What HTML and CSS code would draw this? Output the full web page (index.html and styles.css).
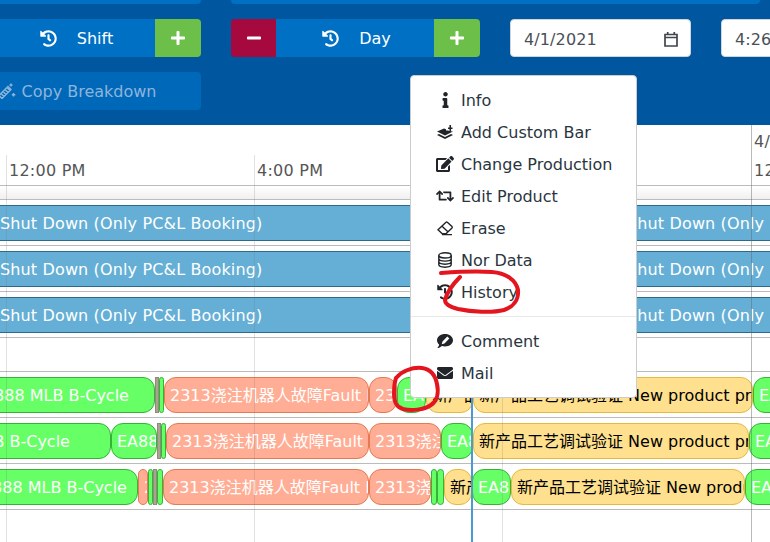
FILE: index.html
```html
<!DOCTYPE html>
<html lang="en">
<head>
<meta charset="utf-8">
<title>Schedule</title>
<link rel="stylesheet" href="styles.css">
</head>
<body>
<header class="toolbar">
  <button class="btn btn-top"></button>
  <button class="btn btn-top btn-wide"></button>
  <div class="stepper">
    <span class="step step-minus"><svg class="i-step" viewBox="0 0 448 512"><path d="M416 208H32c-17.67 0-32 14.33-32 32v32c0 17.67 14.33 32 32 32h384c17.67 0 32-14.33 32-32v-32c0-17.67-14.33-32-32-32z"/></svg></span>
    <span class="step-label"><svg class="i-hist" viewBox="0 0 512 512"><path d="M504 255.531c.253 136.64-111.18 248.372-247.82 248.468-59.015.042-113.223-20.53-155.822-54.911-11.077-8.94-11.905-25.541-1.839-35.607l11.267-11.267c8.609-8.609 22.353-9.551 31.891-1.984C173.062 425.135 212.781 440 256 440c101.705 0 184-82.311 184-184 0-101.705-82.311-184-184-184-48.814 0-93.149 18.969-126.068 49.932l50.754 50.754c10.08 10.08 2.941 27.314-11.313 27.314H24c-8.837 0-16-7.163-16-16V38.627c0-14.254 17.234-21.393 27.314-11.314l49.372 49.372C129.209 34.136 189.552 8 256 8c136.81 0 247.747 110.78 248 247.531zm-180.912 78.784l9.823-12.63c8.138-10.463 6.253-25.542-4.21-33.679L288 256.349V152c0-13.255-10.745-24-24-24h-16c-13.255 0-24 10.745-24 24v135.651l65.409 50.874c10.463 8.137 25.541 6.253 33.679-4.21z"/></svg>Shift</span>
    <span class="step step-plus"><svg class="i-step" viewBox="0 0 448 512"><path d="M416 208H272V64c0-17.67-14.33-32-32-32h-32c-17.67 0-32 14.33-32 32v144H32c-17.67 0-32 14.33-32 32v32c0 17.67 14.33 32 32 32h144v144c0 17.67 14.33 32 32 32h32c17.67 0 32-14.33 32-32V304h144c17.67 0 32-14.33 32-32v-32c0-17.67-14.33-32-32-32z"/></svg></span>
  </div>
  <div class="stepper stepper-day">
    <span class="step step-minus"><svg class="i-step" viewBox="0 0 448 512"><path d="M416 208H32c-17.67 0-32 14.33-32 32v32c0 17.67 14.33 32 32 32h384c17.67 0 32-14.33 32-32v-32c0-17.67-14.33-32-32-32z"/></svg></span>
    <span class="step-label"><svg class="i-hist" viewBox="0 0 512 512"><path d="M504 255.531c.253 136.64-111.18 248.372-247.82 248.468-59.015.042-113.223-20.53-155.822-54.911-11.077-8.94-11.905-25.541-1.839-35.607l11.267-11.267c8.609-8.609 22.353-9.551 31.891-1.984C173.062 425.135 212.781 440 256 440c101.705 0 184-82.311 184-184 0-101.705-82.311-184-184-184-48.814 0-93.149 18.969-126.068 49.932l50.754 50.754c10.08 10.08 2.941 27.314-11.313 27.314H24c-8.837 0-16-7.163-16-16V38.627c0-14.254 17.234-21.393 27.314-11.314l49.372 49.372C129.209 34.136 189.552 8 256 8c136.81 0 247.747 110.78 248 247.531zm-180.912 78.784l9.823-12.63c8.138-10.463 6.253-25.542-4.21-33.679L288 256.349V152c0-13.255-10.745-24-24-24h-16c-13.255 0-24 10.745-24 24v135.651l65.409 50.874c10.463 8.137 25.541 6.253 33.679-4.21z"/></svg>Day</span>
    <span class="step step-plus"><svg class="i-step" viewBox="0 0 448 512"><path d="M416 208H272V64c0-17.67-14.33-32-32-32h-32c-17.67 0-32 14.33-32 32v144H32c-17.67 0-32 14.33-32 32v32c0 17.67 14.33 32 32 32h144v144c0 17.67 14.33 32 32 32h32c17.67 0 32-14.33 32-32V304h144c17.67 0 32-14.33 32-32v-32c0-17.67-14.33-32-32-32z"/></svg></span>
  </div>
  <div class="field"><span class="field-text">4/1/2021</span><svg class="i-cal" viewBox="0 0 14 16"><path d="M1 3.500h12v11.500H1zM1 6.500h12M3.700 1v2.500M10.300 1v2.500"/></svg></div>
  <div class="field field-time"><span class="field-text">4:26 PM</span></div>
  <button class="btn btn-copy"><svg class="i-wand" viewBox="0 0 18 16"><path d="M1 12.500l9-9 3 3-9 9zM3 10.500l3 3M5 8.500l3 3M7 6.500l3 3M9 4.500l3 3"/><path d="M13 .5v3M11.500 2h3M15.500 10v3.500M13.800 11.700h3.500"/></svg>Copy Breakdown</button>
</header>

<main class="gantt">
  <div class="ruler">
    <div class="tick" style="width:248px">12:00 PM</div>
    <div class="tick" style="width:248px">4:00 PM</div>
    <div class="tick" style="width:249px">8:00 PM</div>
    <div class="tick">4/2/2021<br>12:00 AM</div>
  </div>
  <div class="band"></div>

  <div class="row row-stop"><div class="bar stop" style="width:627px">Shut Down (Only PC&amp;L Booking)</div><div class="bar stop" style="width:160px">Shut Down (Only PC&amp;L Booking)</div></div>
  <div class="row row-stop"><div class="bar stop" style="width:627px">Shut Down (Only PC&amp;L Booking)</div><div class="bar stop" style="width:160px">Shut Down (Only PC&amp;L Booking)</div></div>
  <div class="row row-stop"><div class="bar stop" style="width:627px">Shut Down (Only PC&amp;L Booking)</div><div class="bar stop" style="width:160px">Shut Down (Only PC&amp;L Booking)</div></div>
  <div class="row row-empty"></div>

  <div class="row row-line-a">
    <div class="bar green" style="width:188px">EA888 MLB B-Cycle</div>
    <div class="bar grey" style="width:4px"></div>
    <div class="bar green" style="width:5px"></div>
    <div class="bar fault" style="width:205px">2313浇注机器人故障Fault Recovery</div>
    <div class="bar fault" style="width:28px">2313浇注机器人故障</div>
    <div class="bar green" style="width:29px">EA888 MLB</div>
    <div class="bar new" style="width:47px">新产品工艺调试验证</div>
    <div class="bar new" style="width:280px">新产品工艺调试验证 New product process</div>
    <div class="bar green" style="width:40px">EA888</div>
  </div>
  <div class="row row-line-b">
    <div class="bar green" style="width:203px">EA888 MLB B-Cycle</div>
    <div class="bar green" style="width:46px">EA888 MLB</div>
    <div class="bar grey" style="width:4px"></div>
    <div class="bar green" style="width:5px"></div>
    <div class="bar fault" style="width:203px">2313浇注机器人故障Fault Recovery</div>
    <div class="bar fault" style="width:72px">2313浇注机器人故障</div>
    <div class="bar green" style="width:32px">EA888 MLB</div>
    <div class="bar new" style="width:276px">新产品工艺调试验证 New product process</div>
    <div class="bar green" style="width:40px">EA888</div>
  </div>
  <div class="row row-line-c">
    <div class="bar green" style="width:173px">EA888 MLB B-Cycle</div>
    <div class="bar fault" style="width:10px">2313</div>
    <div class="bar green" style="width:5px"></div>
    <div class="bar grey" style="width:4px"></div>
    <div class="bar green" style="width:6px"></div>
    <div class="bar fault" style="width:206px">2313浇注机器人故障Fault Recovery</div>
    <div class="bar fault" style="width:62px">2313浇注机器人故障</div>
    <div class="bar green" style="width:6px"></div>
    <div class="bar green" style="width:7px"></div>
    <div class="bar new" style="width:28px">新产品工艺调试验证</div>
    <div class="bar green" style="width:39px">EA888 MLB</div>
    <div class="bar new" style="width:234px">新产品工艺调试验证 New product process</div>
    <div class="bar green" style="width:40px">EA888</div>
  </div>

  <span class="gridline" style="left:6px"></span>
  <span class="gridline" style="left:254px"></span>
  <span class="gridline" style="left:502px"></span>
  <span class="gridline gridline-day" style="left:751px"></span>
  <span class="now"></span>
</main>

<nav class="menu">
  <a class="item"><span class="ico"><svg class="i-info" viewBox="0 0 192 512"><path d="M20 424.229h20V279.771H20c-11.046 0-20-8.954-20-20V212c0-11.046 8.954-20 20-20h112c11.046 0 20 8.954 20 20v212.229h20c11.046 0 20 8.954 20 20V492c0 11.046-8.954 20-20 20H20c-11.046 0-20-8.954-20-20v-47.771c0-11.046 8.954-20 20-20zM96 0C56.235 0 24 32.235 24 72s32.235 72 72 72 72-32.235 72-72S135.764 0 96 0z"/></svg></span>Info</a>
  <a class="item"><span class="ico"><svg class="i-md" viewBox="0 0 18 16"><path d="M1 7.600L8 4.400l2 .9v1.200h2.200l1 .5 3.800 .6-8 3.900zM1 11l2-.9 6 2.900 6-2.900 2 .9-8 4z"/><path d="M12 3.500h4.500v1.600H12zM13.450 1h1.600v6.500h-1.600z"/></svg></span>Add Custom Bar</a>
  <a class="item"><span class="ico"><svg class="i-md" viewBox="0 0 576 512"><path d="M402.6 83.2l90.2 90.2c3.8 3.8 3.8 10 0 13.8L274.4 405.6l-92.8 10.3c-12.4 1.4-22.9-9.1-21.5-21.5l10.3-92.8L388.8 83.2c3.8-3.8 10-3.8 13.8 0zm162-22.9l-48.8-48.8c-15.2-15.2-39.9-15.2-55.2 0l-35.4 35.4c-3.8 3.8-3.8 10 0 13.8l90.2 90.2c3.8 3.8 10 3.8 13.8 0l35.4-35.4c15.2-15.3 15.2-40 0-55.2zM384 346.2V448H64V128h229.8c3.2 0 6.2-1.3 8.5-3.5l40-40c7.6-7.6 2.2-20.5-8.5-20.5H48C21.5 64 0 85.5 0 112v352c0 26.5 21.5 48 48 48h352c26.5 0 48-21.5 48-48V306.2c0-10.7-12.9-16-20.5-8.5l-40 40c-2.2 2.3-3.5 5.3-3.5 8.5z"/></svg></span>Change Production</a>
  <a class="item"><span class="ico"><svg class="i-md" viewBox="0 0 640 512"><path d="M629.657 343.598L528.971 444.284c-9.373 9.372-24.568 9.372-33.941 0L394.343 343.598c-9.373-9.373-9.373-24.569 0-33.941l10.823-10.823c9.562-9.562 25.133-9.34 34.419.492L480 342.118V160H292.451a24.005 24.005 0 0 1-16.971-7.029l-16-16C244.361 121.851 255.069 96 276.451 96H520c13.255 0 24 10.745 24 24v222.118l40.416-42.792c9.285-9.831 24.856-10.054 34.419-.492l10.823 10.823c9.372 9.372 9.372 24.569-.001 33.941zm-265.138 15.431A23.999 23.999 0 0 0 347.548 352H160V169.881l40.416 42.792c9.286 9.831 24.856 10.054 34.419.491l10.822-10.822c9.373-9.373 9.373-24.569 0-33.941L144.971 67.716c-9.373-9.373-24.569-9.373-33.941 0L10.343 168.402c-9.373 9.373-9.373 24.569 0 33.941l10.822 10.822c9.562 9.562 25.133 9.34 34.419-.491L96 169.881V392c0 13.255 10.745 24 24 24h243.549c21.382 0 32.09-25.851 16.971-40.971l-16.001-16z"/></svg></span>Edit Product</a>
  <a class="item"><span class="ico"><svg class="i-line" viewBox="0 0 16 16"><path d="M1 9.800L9 2.200a1 1 0 0 1 1.300 0L15 6.600a1 1 0 0 1 0 1.300L9.200 13.600H5zM4.800 6l5.800 5.400M5 14.600h10"/></svg></span>Erase</a>
  <a class="item"><span class="ico"><svg class="i-line" viewBox="0 0 16 16"><ellipse cx="8" cy="3.400" rx="6.200" ry="2.600"/><path d="M1.800 3.400v9.200c0 1.400 2.800 2.600 6.200 2.600s6.200-1.200 6.200-2.600V3.400M1.800 6.500c0 1.400 2.800 2.600 6.200 2.600s6.200-1.200 6.200-2.600M1.800 9.600c0 1.400 2.800 2.600 6.200 2.600s6.200-1.200 6.200-2.600"/></svg></span>Nor Data</a>
  <a class="item"><span class="ico"><svg class="i-md" viewBox="0 0 512 512"><path d="M504 255.531c.253 136.64-111.18 248.372-247.82 248.468-59.015.042-113.223-20.53-155.822-54.911-11.077-8.94-11.905-25.541-1.839-35.607l11.267-11.267c8.609-8.609 22.353-9.551 31.891-1.984C173.062 425.135 212.781 440 256 440c101.705 0 184-82.311 184-184 0-101.705-82.311-184-184-184-48.814 0-93.149 18.969-126.068 49.932l50.754 50.754c10.08 10.08 2.941 27.314-11.313 27.314H24c-8.837 0-16-7.163-16-16V38.627c0-14.254 17.234-21.393 27.314-11.314l49.372 49.372C129.209 34.136 189.552 8 256 8c136.81 0 247.747 110.78 248 247.531zm-180.912 78.784l9.823-12.63c8.138-10.463 6.253-25.542-4.21-33.679L288 256.349V152c0-13.255-10.745-24-24-24h-16c-13.255 0-24 10.745-24 24v135.651l65.409 50.874c10.463 8.137 25.541 6.253 33.679-4.21z"/></svg></span>History</a>
  <hr class="divider">
  <a class="item"><span class="ico"><svg class="i-md" viewBox="0 0 16 16"><path fill-rule="evenodd" d="M8 1c4.400 0 8 2.700 8 6.200s-3.600 6.200-8 6.200c-1.100 0-2.200-.2-3.200-.5C3.600 13.900 2 15 .3 15c1-.9 1.700-2.300 1.800-3.500C.8 10.400 0 8.900 0 7.200 0 3.700 3.600 1 8 1zM10.300 3.600L5.500 8.400 4.700 11.200 7.500 10.400 12.300 5.600z"/></svg></span>Comment</a>
  <a class="item"><span class="ico"><svg class="i-md" viewBox="0 0 512 512"><path d="M502.3 190.8c3.9-3.1 9.7-.2 9.7 4.7V400c0 26.5-21.5 48-48 48H48c-26.5 0-48-21.5-48-48V195.6c0-5 5.7-7.8 9.7-4.7 22.4 17.4 52.1 39.5 154.1 113.6 21.1 15.4 56.7 47.8 92.2 47.6 35.7.3 72-32.8 92.3-47.6 102-74.1 131.6-96.3 154-113.7zM256 320c23.2.4 56.6-29.2 73.4-41.4 132.7-96.3 142.8-104.7 173.4-128.7 5.8-4.5 9.2-11.5 9.2-18.9v-19c0-26.5-21.5-48-48-48H48C21.5 64 0 85.5 0 112v19c0 7.4 3.4 14.3 9.2 18.9 30.6 23.9 40.7 32.4 173.4 128.7 16.8 12.2 50.2 41.8 73.4 41.4z"/></svg></span>Mail</a>
</nav>

<svg class="ink" viewBox="0 0 770 542">
  <path d="M441 273C455 272 478 271 492 272C506 273 516 280 518 290C519 300 513 307 504 310C492 313 472 312 458 309C450 307 445 304 445 300C447 292 453 284 460 277"/>
  <path d="M396 378C402 371 412 367 422 368C430 369 435 374 437 384C439 393 437 401 431 405C424 410 411 411 403 409C396 407 394 402 394 394C394 388 394 384 396 378"/>
</svg>
</body>
</html>
```
FILE: styles.css
```css
* { box-sizing: border-box; }

html, body {
  margin: 0;
  height: 100%;
  overflow: hidden;
  background: #fff;
}

body {
  position: relative;
  font-family: "DejaVu Sans", Verdana, "Noto Sans CJK SC", sans-serif;
  font-size: 16px;
  color: #212529;
}

/* toolbar */
.toolbar {
  display: grid;
  grid-template-columns: 248px 249px 181px 39px;
  grid-auto-rows: 38px;
  gap: 15px 30px;
  margin: -34px 0 0 -47px;
  width: 817px;
  padding-bottom: 15px;
  background: #00569f;
}

.btn {
  border: 0;
  border-radius: 4px;
  background: #0070c5;
  font: inherit;
  color: #fff;
}

.btn-wide { grid-column: span 3; }

.stepper {
  display: flex;
  border-radius: 4px;
  overflow: hidden;
}

.step {
  display: flex;
  align-items: center;
  justify-content: center;
  flex: 0 0 45px;
  color: #fff;
}

.step-minus { background: #a6093d; }
.step-plus { background: #6cc04a; flex-basis: 46px; }

.i-step { width: 14px; height: 16px; fill: currentColor; }

.step-label {
  flex: 1;
  display: flex;
  align-items: center;
  justify-content: center;
  gap: 20px;
  background: #0070c5;
  color: #fff;
}

.stepper-day .step-label { padding-left: 3px; }

.i-hist { width: 17px; height: 17px; fill: #fff; }

.field {
  display: flex;
  align-items: center;
  justify-content: space-between;
  width: 181px;
  padding: 2px 12px 0 13px;
  border: 1px solid #ced4da;
  border-radius: 4px;
  background: #fff;
  color: #495057;
}

.field-text { letter-spacing: 0.12px; }
.field-time { justify-content: flex-start; }

.i-cal {
  width: 14px;
  height: 16px;
  fill: none;
  stroke: #3f464d;
  stroke-width: 1.7;
}

.btn-copy {
  grid-column: 1;
  display: flex;
  align-items: center;
  justify-content: center;
  gap: 6px;
  background: #0068b9;
  color: #8db5dc;
}

.i-wand {
  width: 18px;
  height: 16px;
  fill: none;
  stroke: #8db5dc;
  stroke-width: 1.4;
}

/* timeline */
.gantt {
  position: relative;
  height: 417px;
  overflow: hidden;
}

.ruler {
  display: flex;
  align-items: flex-end;
  height: 61px;
  padding-left: 9px;
  border-bottom: 1px solid #bbb;
  line-height: 29px;
  letter-spacing: 0.25px;
  color: #555;
  white-space: nowrap;
}

.tick { flex: none; }

.band {
  height: 14px;
  border-bottom: 1px solid #bbb;
  background: linear-gradient(#fff, #f0f0f0);
}

.row {
  display: flex;
  height: 46px;
  padding-top: 5px;
  width: 920px;
  border-bottom: 1px solid #bbb;
}

.row-stop { margin-left: -5px; }
.row-empty { height: 34px; }
.row-line-a { margin-left: -33px; }
.row-line-b { margin-left: -92px; }
.row-line-c { margin-left: -35px; }

.bar {
  flex: none;
  height: 36px;
  padding: 1px 0 0 5px;
  overflow: hidden;
  white-space: nowrap;
  line-height: 34px;
  border: 1px solid;
}

.stop {
  background: #65afd6;
  border-color: #2c6a8a;
  border-width: 1px 0;
  letter-spacing: 0.14px;
  color: #fff;
}

.green {
  background: #66ff66;
  border-color: #36b336;
  border-radius: 12px;
  color: #fff;
}

.grey {
  background: #b0a090;
  border-color: #8c8c7c;
  padding: 0;
}

.fault {
  background: #ffad94;
  border-color: #e57a50;
  border-radius: 12px;
  color: #fff;
}

.new {
  background: #ffe08e;
  border-color: #e5b93e;
  border-radius: 12px;
  color: #000;
}

.green:empty { padding: 0; border-radius: 4px; }

.gridline {
  position: absolute;
  top: 30px;
  bottom: 0;
  width: 1px;
  background: rgba(120, 120, 120, 0.22);
}

.gridline-day {
  top: 0;
  background: rgba(100, 100, 100, 0.45);
}

.now {
  position: absolute;
  top: 61px;
  bottom: 0;
  left: 471px;
  width: 2px;
  background: #4a9ad4;
}

/* context menu */
.menu {
  position: absolute;
  left: 410px;
  top: 75px;
  width: 227px;
  height: 323px;
  padding: 8px 0;
  border: 1px solid #ccc;
  border-radius: 4px;
  background: #fff;
}

.item {
  display: flex;
  align-items: center;
  gap: 6px;
  height: 32px;
  padding-left: 24px;
  color: #2a3540;
}

.ico {
  flex: 0 0 20px;
  display: flex;
  justify-content: center;
}

.i-md { width: 18px; height: 16px; fill: #212529; }
.i-info { width: 7px; height: 16px; fill: #212529; }

.i-line {
  width: 16px;
  height: 16px;
  fill: none;
  stroke: #212529;
  stroke-width: 1.4;
}

.divider {
  height: 1px;
  margin: 8px 0;
  border: 0;
  background: #e9e9e9;
}

/* hand-drawn marks on top of the screenshot */
.ink {
  position: absolute;
  left: 0;
  top: 0;
  width: 770px;
  height: 542px;
  fill: none;
  stroke: #e3161f;
  stroke-width: 4;
  stroke-linecap: round;
  stroke-linejoin: round;
  pointer-events: none;
}
```
